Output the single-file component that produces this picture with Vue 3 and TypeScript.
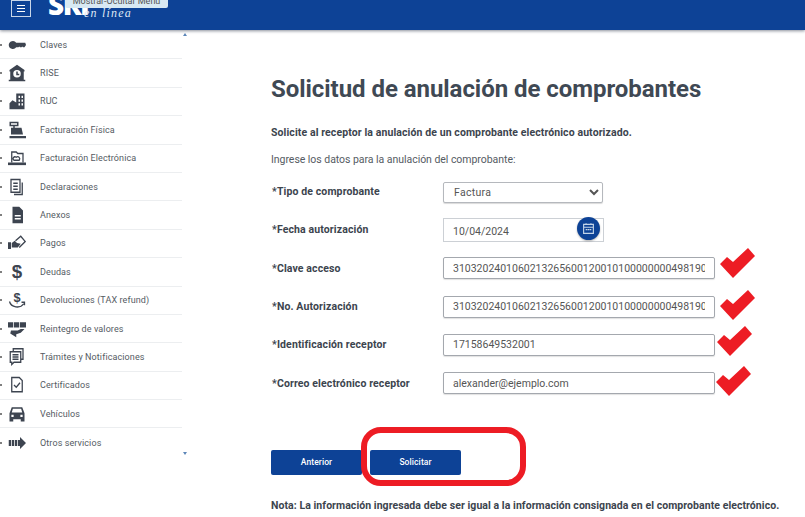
<script setup lang="ts">
interface MenuItem {
  label: string
  fill?: string
  line?: string
  glyph?: string
}

interface Field {
  label: string
  value: string
  checkLeft: number
  checkTop: number
}

const menu: MenuItem[] = [
  { label: 'Claves', fill: 'M1 12a5.500 5.500 0 0 1 10-3h12l1 3-2 3h-2l-1-1-1 1h-2l-1-1-1 1h-3a5.500 5.500 0 0 1-10-3z' },
  { label: 'RISE', fill: 'M12 1 22 8v2h-1v11h2v2H1v-2h2V10H2V8zM12 8a5 5 0 1 0 0 10 5 5 0 0 0 0-10zM11 10h2v3h2v2h-4z' },
  { label: 'RUC', fill: 'M11 2h11v21H2v-8l4-4 5 3zM14 5v3h2V5zM18 5v3h2V5zM14 10v3h2v-3zM18 10v3h2v-3zM14 15v3h2v-3zM18 15v3h2v-3z' },
  { label: 'Facturación Física', fill: 'M2 1h12v6H9v2h9l2 9H4V9h3V7H2zM4 3v2h8V3zM2 20h22v3H2z' },
  { label: 'Facturación Electrónica', line: 'M5 18V4h6l2 2h7v12M8 15c-3-2 0-6 3-4 3-2 6 1 4 4z', fill: 'M0 18h24v3.500H0z' },
  { label: 'Declaraciones', line: 'M4 2h12v17H4zM7 7h6M7 11h6M7 15h6M19 6v16H8' },
  { label: 'Anexos', fill: 'M6 1h9l5 5v17H6zM9 12v2h8v-2zM9 16v2h8v-2z' },
  { label: 'Pagos', fill: 'M0 11h4v9H0zM5 12l4-3 3 3 5 1-4 5H5z', line: 'M10 9l7-6 6 7-8 8' },
  { label: 'Deudas', glyph: '$' },
  { label: 'Devoluciones (TAX refund)', glyph: '$', line: 'M2 14c2 8 14 10 19 3M18 15h4v4' },
  { label: 'Reintegro de valores', fill: 'M0 3h7v7H0zM8 3h7v7H8zM16 3h8v7h-8zM4 14h9l4-2h5l-5 5-6 2v4l-8-5z' },
  { label: 'Trámites y Notificaciones', line: 'M7 4V1h13v14h-3M3 5h14v14H8l-3 3v-3H3zM6 9h8M6 12h8M6 15h8' },
  { label: 'Certificados', line: 'M5 2h10l4 4v15H5zM8 12l3 3 5-6' },
  { label: 'Vehículos', fill: 'M5 3h14l3 8v11h-5v-3H7v3H2V11zM6.500 5 5 10h14l-1.500-5zM4.500 13v3h3v-3zM16.500 13v3h3v-3z' },
  { label: 'Otros servicios', fill: 'M1 8h3v8H1zM5 8h3v8H5zM9 8h3v8H9zM13 8h3V4l8 8-8 8v-4h-3z' },
]

const fields: Field[] = [
  { label: '*Clave acceso', value: '3103202401060213265600120010100000000498190', checkLeft: 277, checkTop: -9 },
  { label: '*No. Autorización', value: '3103202401060213265600120010100000000498190', checkLeft: 277, checkTop: -6 },
  { label: '*Identificación receptor', value: '17158649532001', checkLeft: 274, checkTop: -8 },
  { label: '*Correo electrónico receptor', value: 'alexander@ejemplo.com', checkLeft: 273, checkTop: -6 },
]
</script>

<template>
  <div class="page">
    <header class="topbar">
      <button class="burger" type="button"><span></span><span></span><span></span></button>
      <div class="logo">
        <span class="logo-sri">SRI</span>
        <span class="logo-line">en línea</span>
        <span class="tooltip">Mostrar-Ocultar Menú</span>
      </div>
    </header>

    <div class="body-row">
      <aside class="sidebar">
        <ul class="menu">
          <li v-for="item in menu" :key="item.label" class="menu-item">
            <i class="dot"></i>
            <svg class="menu-icon" viewBox="0 0 24 24">
              <text v-if="item.glyph" x="12" :y="item.line ? 14 : 20" class="menu-glyph" :class="{ small: item.line }">{{ item.glyph }}</text>
              <path v-if="item.fill" :d="item.fill" fill="currentColor" fill-rule="evenodd" />
              <path v-if="item.line" :d="item.line" fill="none" stroke="currentColor" stroke-width="1.700" />
            </svg>
            <span>{{ item.label }}</span>
          </li>
        </ul>
        <div class="scroll-arrows">
          <i class="arrow-up"></i>
          <i class="arrow-down"></i>
        </div>
      </aside>

      <main class="content">
        <h1>Solicitud de anulación de comprobantes</h1>
        <p class="lead">Solicite al receptor la anulación de un comprobante electrónico autorizado.</p>
        <p class="intro">Ingrese los datos para la anulación del comprobante:</p>

        <div class="form">
          <label>*Tipo de comprobante</label>
          <div class="control">
            <select class="select"><option>Factura</option></select>
          </div>

          <label>*Fecha autorización</label>
          <div class="control">
            <input class="input date" value="10/04/2024" />
            <span class="calendar">
              <svg viewBox="0 0 16 16" width="13" height="13">
                <path d="M2 3h12v11H2zM2 6.500h12M5 1.500v2M11 1.500v2" fill="none" stroke="#c3d4e8" stroke-width="1.400" />
                <path d="M4.500 8.500h2v1.500h-2zM7 8.500h2v1.500H7zM9.500 8.500h2v1.500h-2z" fill="#c3d4e8" />
              </svg>
            </span>
          </div>

          <template v-for="field in fields" :key="field.label">
            <label>{{ field.label }}</label>
            <div class="control">
              <input class="input wide" :value="field.value" />
              <svg class="check" viewBox="0 0 35 30" :style="{ left: field.checkLeft + 'px', top: field.checkTop + 'px' }">
                <path d="M0 16 7 9l6 5L28 0l7 8-22 22z" fill="#ed1c24" />
              </svg>
            </div>
          </template>
        </div>

        <div class="actions">
          <button class="btn" type="button">Anterior</button>
          <button class="btn" type="button">Solicitar</button>
          <span class="highlight"></span>
        </div>

        <p class="note">Nota: La información ingresada debe ser igual a la información consignada en el comprobante electrónico.</p>
      </main>
    </div>
  </div>
</template>

<style>
html,
body {
  margin: 0;
  overflow: hidden;
  background: #fff;
}
</style>

<style scoped>
.page {
  width: 805px;
  height: 517px;
  overflow: hidden;
  font-family: Roboto, "Liberation Sans", sans-serif;
  color: #444b55;
}

.topbar {
  display: flex;
  align-items: flex-start;
  height: 30px;
  background: #0d4296;
  box-shadow: 0 1px 3px rgba(40, 50, 70, 0.55);
  position: relative;
  overflow: hidden;
}

.burger {
  display: flex;
  flex-direction: column;
  justify-content: center;
  gap: 2px;
  width: 20px;
  height: 17px;
  margin: 0 0 0 11px;
  padding: 0 5px;
  background: transparent;
  border: 1px solid #c9d6e8;
  box-sizing: border-box;
}

.burger span {
  display: block;
  height: 1px;
  background: #fff;
}

.logo {
  position: relative;
  margin-left: 17px;
  width: 120px;
  height: 30px;
}

.logo-sri {
  position: absolute;
  left: 0;
  top: -10px;
  font: 800 28px/29px "Open Sans", sans-serif;
  letter-spacing: -1.5px;
  color: #fff;
}

.logo-line {
  position: absolute;
  left: 36px;
  top: 6px;
  font: italic 12px/14px "Liberation Serif", serif;
  letter-spacing: 1.2px;
  color: #dfe8f3;
}

.tooltip {
  position: absolute;
  left: 17px;
  top: -6px;
  width: 103px;
  height: 14px;
  border-radius: 0 0 2px 2px;
  background: #d8e9f3;
  color: #555;
  font-size: 9px;
  line-height: 14px;
  text-align: center;
  white-space: nowrap;
}

.body-row {
  display: flex;
}

.sidebar {
  display: flex;
  width: 190px;
  padding-top: 1px;
  flex: none;
}

.menu {
  width: 183px;
  margin: 0;
  padding: 0;
  list-style: none;
}

.menu-item {
  display: flex;
  align-items: center;
  height: 28.4px;
  box-sizing: border-box;
  border-bottom: 1px solid #eceef0;
  font-size: 9px;
  letter-spacing: 0.1px;
  color: #555b63;
}

.menu-item:last-child {
  border-bottom: none;
}

.dot {
  width: 2px;
  height: 2px;
  border-radius: 50%;
  background: #555;
  flex: none;
}

.menu-icon {
  width: 18px;
  height: 18px;
  margin: 0 14px 0 6px;
  color: #3d4450;
  flex: none;
}

.menu-glyph {
  font: 700 25px "Liberation Sans", sans-serif;
  text-anchor: middle;
  fill: currentColor;
}

.menu-glyph.small {
  font-size: 17px;
}

.scroll-arrows {
  display: flex;
  flex-direction: column;
  justify-content: space-between;
  width: 7px;
  height: 422px;
  margin-left: 1px;
  padding-top: 2px;
}

.arrow-up,
.arrow-down {
  width: 0;
  height: 0;
  border-left: 2px solid transparent;
  border-right: 2px solid transparent;
}

.arrow-up {
  border-bottom: 3px solid #5c86b8;
}

.arrow-down {
  border-top: 3px solid #5c86b8;
}

.content {
  padding: 44px 0 0 81px;
  flex: 1;
}

h1 {
  margin: 0;
  font-size: 24px;
  line-height: 30px;
  font-weight: 700;
  letter-spacing: -0.05px;
  color: #3f4954;
}

.lead {
  margin: 22px 0 0;
  font-size: 10.5px;
  line-height: 14px;
  font-weight: 700;
  letter-spacing: 0.1px;
  color: #3c444e;
}

.intro {
  margin: 13px 0 0;
  font-size: 10.5px;
  line-height: 14px;
  letter-spacing: -0.04px;
  color: #555b63;
}

.form {
  display: grid;
  grid-template-columns: 172px 272px;
  grid-auto-rows: 38.3px;
  align-items: center;
  margin-top: 5.5px;
}

.form label {
  padding-left: 1px;
  font-size: 10.5px;
  font-weight: 700;
  letter-spacing: 0.12px;
  color: #3c444e;
}

.control {
  position: relative;
  height: 22px;
}

.select {
  width: 160px;
  height: 21px;
  padding: 0 0 0 6px;
  border: 1px solid #b5b8bd;
  border-radius: 2px;
  background: #fff;
  font: 10.500px Roboto, sans-serif;
  letter-spacing: 0.3px;
  color: #555;
  box-shadow: 0 1px 1px rgba(0, 0, 0, 0.15);
}

.input {
  display: block;
  height: 22px;
  box-sizing: border-box;
  padding: 0 9px;
  border: 1px solid #a4a8ae;
  border-radius: 2px;
  outline: none;
  font: 10.500px Roboto, sans-serif;
  letter-spacing: 0;
  color: #555;
  background: #fff;
  box-shadow: 0 1px 1px rgba(0, 0, 0, 0.12);
}

.input.wide {
  width: 272px;
}

.input.date {
  width: 161px;
  height: 24px;
  margin-top: -1px;
  padding: 4px 9px 0;
  border-color: #ccd0d5;
  border-radius: 0;
  box-shadow: none;
}

.calendar {
  position: absolute;
  left: 134px;
  top: -2px;
  display: flex;
  align-items: center;
  justify-content: center;
  width: 23px;
  height: 23px;
  border-radius: 50%;
  background: #0d4296;
  box-shadow: 0 1px 2px rgba(0, 0, 0, 0.3);
}

.check {
  position: absolute;
  width: 35px;
  height: 30px;
}

.actions {
  position: relative;
  display: flex;
  gap: 8px;
  margin-top: 47.5px;
}

.btn {
  width: 91px;
  height: 25px;
  padding: 0;
  border: none;
  border-radius: 2px;
  background: #0d4296;
  color: #fff;
  font: 500 8.500px Roboto, sans-serif;
  letter-spacing: 0.1px;
}

.highlight {
  position: absolute;
  left: 90px;
  top: -23px;
  width: 153px;
  height: 47px;
  border: 6px solid #ed1c24;
  border-radius: 20px;
}

.note {
  margin: 24px 0 0;
  font-size: 10.5px;
  line-height: 14px;
  font-weight: 700;
  letter-spacing: 0.06px;
  white-space: nowrap;
  color: #3c444e;
}
</style>
